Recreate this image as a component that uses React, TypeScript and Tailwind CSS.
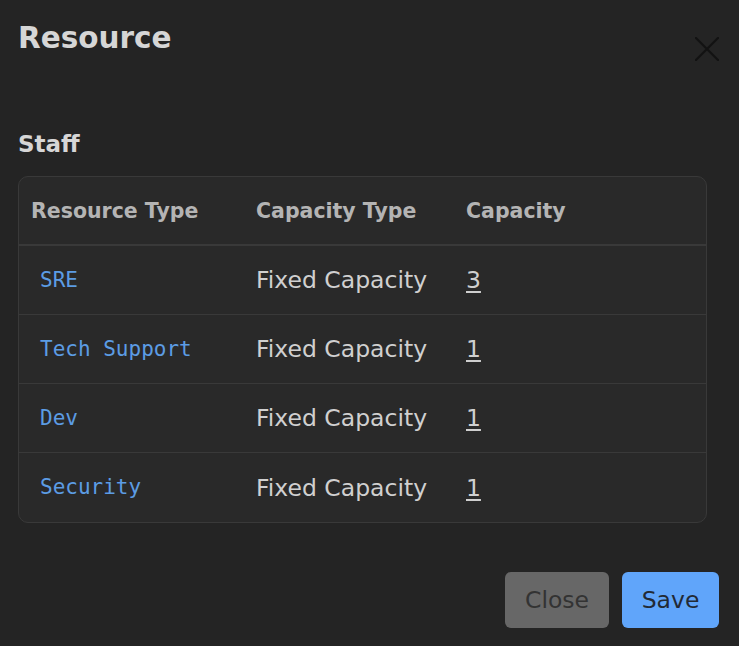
import React from 'react';

const rows = [
  { name: 'SRE', type: 'Fixed Capacity', capacity: 3 },
  { name: 'Tech Support', type: 'Fixed Capacity', capacity: 1 },
  { name: 'Dev', type: 'Fixed Capacity', capacity: 1 },
  { name: 'Security', type: 'Fixed Capacity', capacity: 1 },
];

const App: React.FC = () => {
  return (
    <div className="w-[739px] h-[646px] bg-[#242424] font-['DejaVu_Sans',sans-serif] text-[#d2d2d2] overflow-hidden">
      <div className="flex items-start justify-between pl-[18px] pr-[20px] pt-[20px]">
        <h2 className="text-[29.5px] leading-[36px] font-bold text-[#d6d6d6]">Resource</h2>
        <button className="mt-[17px] w-[24px] h-[24px] text-[#121212]" aria-label="Close">
          <svg viewBox="0 0 24 24" className="w-[24px] h-[24px]" fill="none" stroke="currentColor" strokeWidth="2.2" strokeLinecap="round">
            <path d="M1 1l22 22M23 1L1 23" />
          </svg>
        </button>
      </div>

      <div className="px-[18px] mt-[69px]">
        <h3 className="text-[23px] leading-[28px] font-bold text-[#d6d6d6]">Staff</h3>

        <div className="mt-[18px] w-[689px] border border-[#393939] rounded-[10px] bg-[#292929] overflow-hidden">
          <div className="flex items-center h-[69px] border-b-2 border-[#393939] text-[20.5px] leading-[24px] font-bold text-[#b4b4b4]">
            <div className="w-[225px] pl-[12px]">Resource Type</div>
            <div className="w-[210px] pl-[12px]">Capacity Type</div>
            <div className="flex-1 pl-[12px]">Capacity</div>
          </div>
          {rows.map((row, i) => (
            <div
              key={row.name}
              className={`flex items-center h-[69px] ${i < rows.length - 1 ? 'border-b border-[#393939]' : 'h-[68px]'}`}
            >
              <div className="w-[225px] pl-[21px]">
                <a href="#" className="font-['DejaVu_Sans_Mono',monospace] text-[21px] leading-[26px] text-[#5c9ce4]">
                  {row.name}
                </a>
              </div>
              <div className="w-[210px] pl-[12px] text-[23.5px] leading-[28px] text-[#d0d0d0]">{row.type}</div>
              <div className="flex-1 pl-[12px] text-[23.5px] leading-[28px] text-[#cfcfcf]">
                <span className="underline underline-offset-[3px]">{row.capacity}</span>
              </div>
            </div>
          ))}
        </div>
      </div>

      <div className="flex justify-end gap-[13px] pr-[20px] mt-[49px]">
        <button className="h-[56px] w-[104px] rounded-[6px] bg-[#676767] text-[#333333] text-[23.5px] leading-[28px]">
          Close
        </button>
        <button className="h-[56px] w-[97px] rounded-[6px] bg-[#60a5fa] text-[#222a35] text-[23.5px] leading-[28px]">
          Save
        </button>
      </div>
    </div>
  );
};

export default App;
